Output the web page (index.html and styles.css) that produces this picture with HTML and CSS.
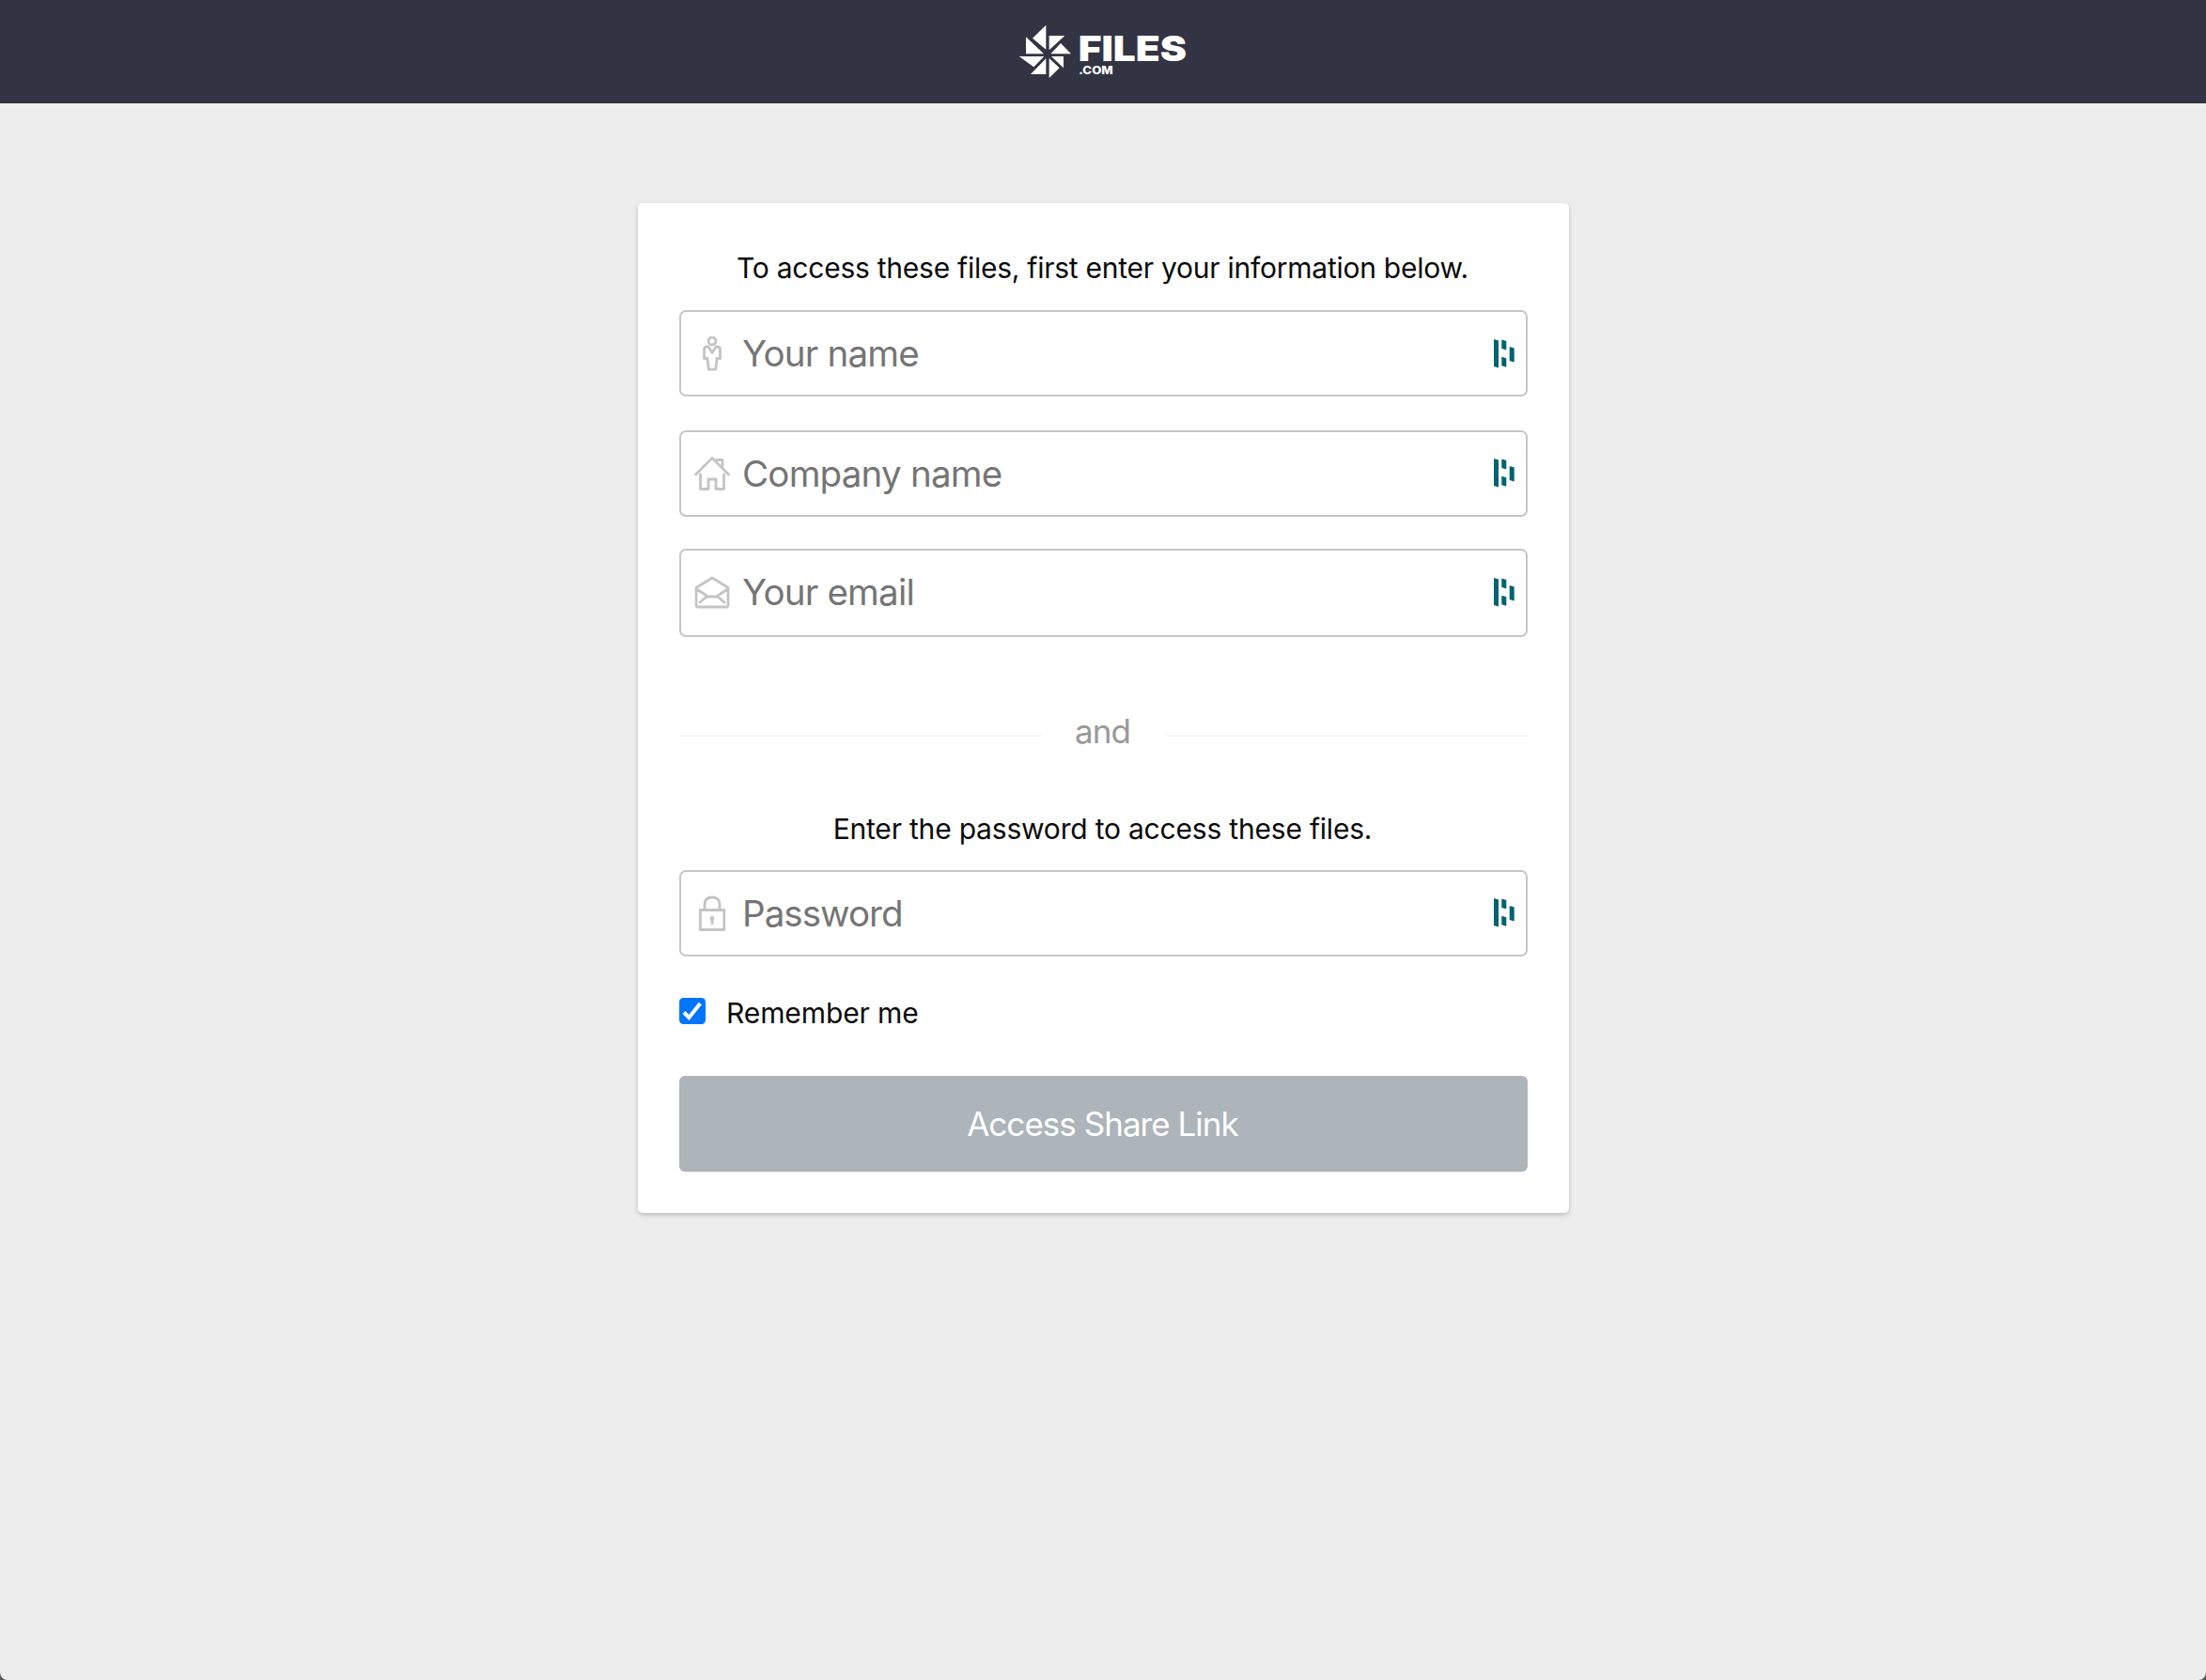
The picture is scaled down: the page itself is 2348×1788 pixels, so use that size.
FILE: index.html
```
<!DOCTYPE html>
<html lang="en">
<head>
<meta charset="utf-8">
<title>Files.com</title>
<link rel="stylesheet" href="styles.css">
</head>
<body>
<svg class="symbols" aria-hidden="true">
  <symbol id="manager" viewBox="0 0 22 32">
    <path fill="#00636f" d="M0 0l5 1.5V30.500l-5-1.500zM8.300 .6l5 1.500V11.500l-5-1.500zM8.300 18.700l5 1.500V29.800l-5-1.500zM16.700 8l5 1.500V24.600l-5-1.500z"/>
  </symbol>
</svg>
<div class="window">
  <header class="topbar">
    <svg class="logo" viewBox="40 45 546 180" fill="#fff" role="img" aria-label="Files.com">
      <path d="M131 50V128L88 92zM141 84H191L141 130zM178 108L211 142H146zM148 150H187V187zM141 156L174 187L141 219zM131 157V207H82zM45 150H125L92 184zM67 88L124 142H67z"/>
      <text class="logo-name" x="234" y="164" textLength="346" lengthAdjust="spacingAndGlyphs">FILES</text>
      <text class="logo-tld" x="236" y="206" textLength="109" lengthAdjust="spacingAndGlyphs">.COM</text>
    </svg>
  </header>
  <main>
    <form class="card">
      <p class="intro">To access these files, first enter your information below.</p>
      <label class="field name">
        <svg class="icon" viewBox="0 0 38 38"><circle cx="19" cy="5" r="4"/><path d="M15 11H14Q10.500 11 10.500 14V23.500H14L15.200 35.200H22.800L24 23.500H27.500V14Q27.500 11 24 11H23L19 17.500z"/></svg>
        <input type="text" placeholder="Your name">
        <svg class="manager"><use href="#manager"/></svg>
      </label>
      <label class="field company">
        <svg class="icon" viewBox="0 0 38 38"><path d="M1.500 20L19 2.500L36.500 20M6.500 20V35.500H15V25H23V35.500H31.500V20M24 4.500H30V10.500"/></svg>
        <input type="text" placeholder="Company name">
        <svg class="manager"><use href="#manager"/></svg>
      </label>
      <label class="field email">
        <svg class="icon" viewBox="0 0 38 38"><path d="M2 13.500L19 3L36 13.500V32Q36 34 34 34H4Q2 34 2 32zM2.500 15L12.500 21.500M35.500 15L25.500 21.500M6 29L13 23H25L32 29"/></svg>
        <input type="text" placeholder="Your email">
        <svg class="manager"><use href="#manager"/></svg>
      </label>
      <div class="divider"><span>and</span></div>
      <p class="hint">Enter the password to access these files.</p>
      <label class="field">
        <svg class="icon" viewBox="0 0 38 38"><path d="M6.300 15.500H31.700V36.500H6.300zM11 15.500V10Q11 2 19 2T27 10V15.500M19 25V30"/><circle cx="19" cy="24.500" r="1"/></svg>
        <input class="password" type="password" placeholder="Password">
        <svg class="manager"><use href="#manager"/></svg>
      </label>
      <label class="remember">
        <svg class="check" viewBox="0 0 28 28"><rect width="28" height="28" rx="4.500" fill="#0075ff"/><path d="M5 15.500L10.300 21L22.300 6" fill="none" stroke="#fff" stroke-width="4"/></svg>
        <span>Remember me</span>
      </label>
      <button class="submit" type="button">Access Share Link</button>
    </form>
  </main>
</div>
</body>
</html>
```
FILE: styles.css
```
* { box-sizing: border-box; }
body { margin: 0; background: #555; font-family: Inter, "Liberation Sans", sans-serif; color: #0a0a0a; }
.symbols { display: none; }
.window { height: 1788px; background: #ededed; border-radius: 0 0 8px 8px; overflow: hidden; }
.topbar { height: 110px; background: #333443; display: flex; justify-content: center; padding-top: 25px; }
.logo { width: 182px; height: 60px; }
.logo-name { font: 900 109px Inter, sans-serif; }
.logo-tld { font: 800 36px Inter, sans-serif; }
main { display: flex; justify-content: center; padding: 106px 0 0 1px; }
.card { width: 991px; height: 1075px; padding: 49px 44px 0; background: #fff; border-radius: 5px; box-shadow: 0 2px 5px rgba(0, 0, 0, .22); }
p { margin: 0; padding-right: 2px; line-height: 40px; text-align: center; font-size: 30px; }
.intro { height: 65px; letter-spacing: -.25px; }
.field { display: flex; align-items: center; height: 92px; padding: 0 12px 0 14px; border: 2px solid #c6c6c6; border-radius: 7px; }
.name .icon, .name .manager { margin-top: 2px; }
.company { margin-top: 36px; }
.email { margin-top: 34px; height: 94px; }
.icon { width: 38px; height: 38px; flex: none; fill: none; stroke: #c4c4c4; stroke-width: 2.8; stroke-linejoin: round; stroke-linecap: round; }
input { flex: 1; min-width: 0; height: 80px; padding: 0 0 1px 13px; border: 0; background: none; font: 38.5px Inter, sans-serif; letter-spacing: -.78px; }
.password { letter-spacing: -.95px; padding-bottom: 0; }
.email input { padding-bottom: 2px; }
input::placeholder { color: #757575; opacity: 1; }
.manager { width: 22px; height: 32px; flex: none; }
.divider { display: flex; align-items: center; gap: 37px; margin-top: 80px; height: 50px; font-size: 35px; color: #999; }
.divider span { margin: 0 1px 0 -1px; padding-bottom: 11px; letter-spacing: -.9px; }
.divider::before, .divider::after { content: ""; flex: 1; height: 2px; background: #f5f5f5; }
.hint { height: 64px; margin-top: 54px; letter-spacing: -.2px; }
.remember { display: flex; align-items: center; gap: 22px; margin-top: 38px; height: 40px; font-size: 30px; letter-spacing: -.1px; }
.remember span { padding-top: 3px; }
.check { width: 28px; height: 28px; }
.submit { display: block; width: 100%; height: 102px; margin-top: 49px; padding: 0 2px 0 0; border: 0; border-radius: 6px; background: #adb4ba; color: #fff; font: 35px Inter, sans-serif; letter-spacing: -.97px; }
```
